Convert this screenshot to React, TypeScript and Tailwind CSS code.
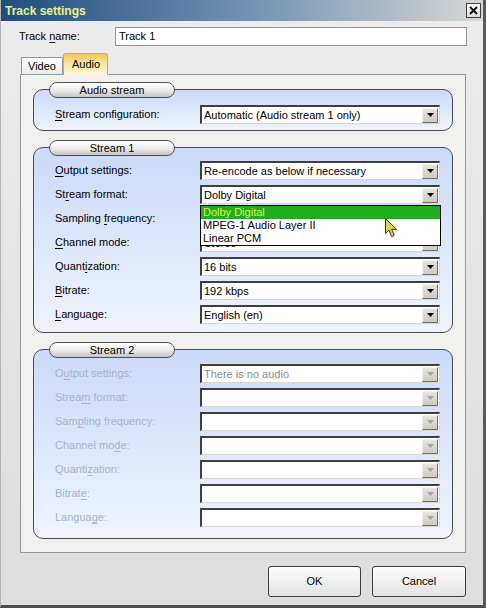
import React from "react";

type Label = [string, string, string];

const stream1: { label: Label; value: string }[] = [
  { label: ["", "O", "utput settings:"], value: "Re-encode as below if necessary" },
  { label: ["St", "r", "eam format:"], value: "Dolby Digital" },
  { label: ["Sampling ", "f", "requency:"], value: "" },
  { label: ["", "C", "hannel mode:"], value: "Stereo" },
  { label: ["Quant", "i", "zation:"], value: "16 bits" },
  { label: ["", "B", "itrate:"], value: "192 kbps" },
  { label: ["", "L", "anguage:"], value: "English (en)" },
];

const stream2: { label: Label; value: string }[] = [
  { label: ["O", "u", "tput settings:"], value: "There is no audio" },
  { label: ["Strea", "m", " format:"], value: "" },
  { label: ["Sam", "p", "ling frequency:"], value: "" },
  { label: ["Channel mo", "d", "e:"], value: "" },
  { label: ["Quanti", "z", "ation:"], value: "" },
  { label: ["Bitrat", "e", ":"], value: "" },
  { label: ["Langua", "g", "e:"], value: "" },
];

function Accel({ label }: { label: Label }) {
  return (
    <>
      {label[0]}
      <span className="underline underline-offset-2">{label[1]}</span>
      {label[2]}
    </>
  );
}

function DropButton({ disabled }: { disabled?: boolean }) {
  return (
    <div className="mr-[1px] flex h-[15px] w-[16px] items-center justify-center border border-t-[#f4f4f0] border-l-[#f4f4f0] border-r-[#6e6e6e] border-b-[#6e6e6e] bg-gradient-to-b from-[#e6e3dc] to-[#cfcbc2]">
      <svg width="7" height="4" viewBox="0 0 7 4">
        <polygon points="0,0 7,0 3.5,4" fill={disabled ? "#a4a4a4" : "#000"} />
      </svg>
    </div>
  );
}

function Combo({ value, disabled, children }: { value: string; disabled?: boolean; children?: React.ReactNode }) {
  return (
    <div className="relative flex h-[19px] w-[240px] items-center border-t-2 border-l-2 border-r border-b border-t-[#3f3f3f] border-l-[#3f3f3f] border-r-[#d8d6d0] border-b-[#d8d6d0] bg-white">
      <span className={`flex-1 truncate pl-[2px] leading-none ${disabled ? "text-[#8c8c8c]" : "text-black"}`}>{value}</span>
      <DropButton disabled={disabled} />
      {children}
    </div>
  );
}

function FormatList() {
  return (
    <div className="absolute left-[-2px] top-[18px] z-10 w-[241px] border border-black bg-white">
      <div className="flex h-[13px] items-center bg-[#1fae1f] pl-[2px] text-[#d9f943]">Dolby Digital</div>
      <div className="flex h-[13px] items-center pl-[2px] text-black">MPEG-1 Audio Layer II</div>
      <div className="flex h-[13px] items-center pl-[2px] text-black">Linear PCM</div>
      <svg className="absolute left-[184px] top-[12px]" width="13" height="20" viewBox="0 0 13 20">
        <path d="M0.5 0.5 L0.5 15.5 L4 12.2 L6.6 18.6 L9.2 17.5 L6.7 11.3 L11.5 11.3 Z" fill="#dcd64a" stroke="#3a3a20" strokeWidth="1" />
      </svg>
    </div>
  );
}

function Group({ title, className, children }: { title: string; className: string; children: React.ReactNode }) {
  return (
    <div className={`relative rounded-[10px] border border-[#4d4d4d] bg-gradient-to-b from-[#cbdaf9] to-[#eff4fd] pl-[21px] ${className}`}>
      <div className="absolute left-[15px] top-[-8px] flex h-[16px] w-[126px] items-center justify-center rounded-full border border-[#505050] bg-gradient-to-b from-white via-[#ededed] to-[#c6c6c6] text-black">
        {title}
      </div>
      {children}
    </div>
  );
}

function Row({ label, value, disabled, children }: { label: Label; value: string; disabled?: boolean; children?: React.ReactNode }) {
  return (
    <div className="flex h-[19px] items-center">
      <span className={`w-[145px] ${disabled ? "text-[#a9b2c4]" : "text-black"}`}>
        <Accel label={label} />
      </span>
      <Combo value={value} disabled={disabled}>
        {children}
      </Combo>
    </div>
  );
}

export default function App() {
  return (
    <div className="h-[608px] w-[486px] overflow-hidden border-r-[3px] border-b-[3px] border-l border-r-[#5a5a5a] border-b-[#4e4e4e] border-l-[#b4b4b4] bg-gradient-to-b from-[#ececec] to-[#dedede] font-['Liberation_Sans',Arial,sans-serif] text-[11px]">
      {/* title bar */}
      <div className="flex h-[21px] items-center justify-between bg-gradient-to-r from-[#1e4e80] via-[#6f90b2] to-[#d8d8d4] pl-[4px] pr-[2px]">
        <span className="text-[12px] font-bold text-[#eef08c]">Track settings</span>
        <div className="flex h-[15px] w-[15px] items-center justify-center border border-[#404040] bg-gradient-to-b from-white to-[#dcdcdc]">
          <svg width="9" height="9" viewBox="0 0 9 9">
            <path d="M1 1 L8 8 M8 1 L1 8" stroke="#000" strokeWidth="1.8" />
          </svg>
        </div>
      </div>

      {/* track name */}
      <div className="mt-[6px] flex items-center pl-[18px]">
        <span className="w-[96px] text-black">
          Track <span className="underline underline-offset-2">n</span>ame:
        </span>
        <div className="flex h-[19px] w-[352px] items-center border border-[#8e979b] bg-white pl-[3px] text-black">Track 1</div>
      </div>

      {/* tabs */}
      <div className="mt-[7px] flex h-[21px] items-end pl-[20px]">
        <div className="flex h-[17px] w-[42px] items-center border border-b-0 border-[#919b9c] bg-gradient-to-b from-white to-[#ececea] pl-[6px] text-black">Video</div>
        <div className="relative z-10 mb-[-1px] flex h-[22px] w-[45px] items-center rounded-t-[3px] border border-b-0 border-[#e3a23a] bg-gradient-to-b from-[#f7c65a] via-[#fde7a0] to-[#fff7dc] pl-[8px] text-black">Audio</div>
      </div>

      {/* panel */}
      <div className="ml-[19px] flex w-[446px] flex-col border border-[#919b9c] bg-[#f1f1ef] px-[12px] pb-[13px] pt-[14px]">
        <Group title="Audio stream" className="pb-[6px] pt-[15px]">
          <Row label={["", "S", "tream configuration:"]} value="Automatic (Audio stream 1 only)" />
        </Group>

        <Group title="Stream 1" className="mt-[16px] pb-[8px] pt-[13px]">
          <div className="flex flex-col gap-[5px]">
            {stream1.map((r, i) => (
              <Row key={i} label={r.label} value={r.value}>
                {i === 1 ? <FormatList /> : null}
              </Row>
            ))}
          </div>
        </Group>

        <Group title="Stream 2" className="mt-[16px] pb-[11px] pt-[14px]">
          <div className="flex flex-col gap-[5px]">
            {stream2.map((r, i) => (
              <Row key={i} label={r.label} value={r.value} disabled />
            ))}
          </div>
        </Group>
      </div>

      {/* buttons */}
      <div className="mt-[13px] flex justify-end gap-[11px] pr-[17px]">
        <button className="h-[31px] w-[93px] rounded-[3px] border border-[#3c3c3c] bg-gradient-to-b from-[#fefefe] to-[#e2e2e2] text-black">OK</button>
        <button className="h-[31px] w-[94px] rounded-[3px] border border-[#3c3c3c] bg-gradient-to-b from-[#fefefe] to-[#e2e2e2] text-black">Cancel</button>
      </div>
    </div>
  );
}
